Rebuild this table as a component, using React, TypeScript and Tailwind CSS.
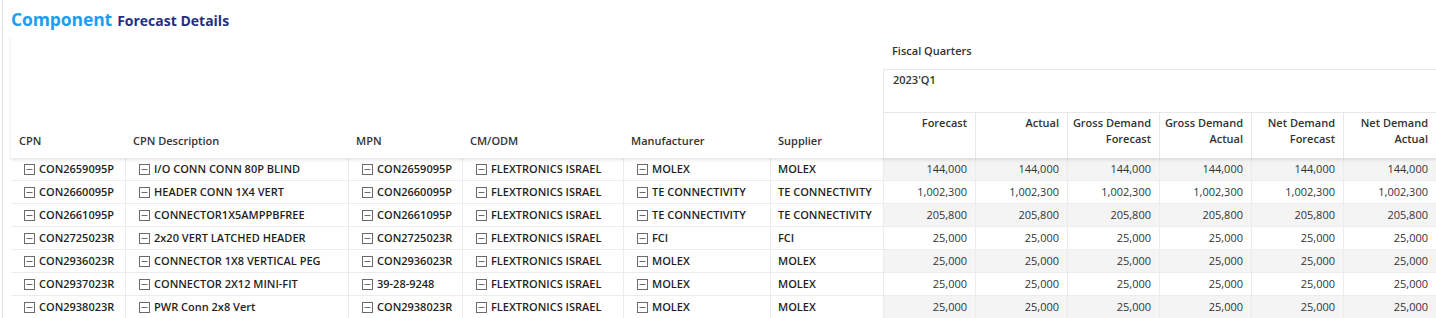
import React from "react";

const rows = [
  ["CON2659095P", "I/O CONN CONN 80P BLIND", "CON2659095P", "FLEXTRONICS ISRAEL", "MOLEX", "MOLEX", "144,000"],
  ["CON2660095P", "HEADER CONN 1X4 VERT", "CON2660095P", "FLEXTRONICS ISRAEL", "TE CONNECTIVITY", "TE CONNECTIVITY", "1,002,300"],
  ["CON2661095P", "CONNECTOR1X5AMPPBFREE", "CON2661095P", "FLEXTRONICS ISRAEL", "TE CONNECTIVITY", "TE CONNECTIVITY", "205,800"],
  ["CON2725023R", "2x20 VERT LATCHED HEADER", "CON2725023R", "FLEXTRONICS ISRAEL", "FCI", "FCI", "25,000"],
  ["CON2936023R", "CONNECTOR 1X8 VERTICAL PEG", "CON2936023R", "FLEXTRONICS ISRAEL", "MOLEX", "MOLEX", "25,000"],
  ["CON2937023R", "CONNECTOR 2X12 MINI-FIT", "39-28-9248", "FLEXTRONICS ISRAEL", "MOLEX", "MOLEX", "25,000"],
  ["CON2938023R", "PWR Conn 2x8 Vert", "CON2938023R", "FLEXTRONICS ISRAEL", "MOLEX", "MOLEX", "25,000"],
];

const cols = "grid-cols-[114px_223px_114px_161px_147px_113px_92px_92px_92px_92px_92px_93px]";

function Collapse() {
  return (
    <svg width="11" height="11" viewBox="0 0 11 11" className="shrink-0">
      <rect x="0.5" y="0.5" width="10" height="10" fill="none" stroke="#6b6b6b" strokeWidth="1" />
      <line x1="2.5" y1="5.5" x2="8.5" y2="5.5" stroke="#6b6b6b" strokeWidth="1" />
    </svg>
  );
}

const numHeaders: [string, string | null][] = [
  ["Forecast", null],
  ["Actual", null],
  ["Gross Demand", "Forecast"],
  ["Gross Demand", "Actual"],
  ["Net Demand", "Forecast"],
  ["Net Demand", "Actual"],
];

export default function App() {
  return (
    <div
      className="w-[1436px] h-[318px] overflow-hidden bg-white text-[#222]"
      style={{ fontFamily: '"Open Sans", "Noto Sans", sans-serif' }}
    >
      <div className="ml-[2px] h-full border-l border-[#e3e3e3] pl-[8px]">
        <div className="h-[35px] flex items-center gap-[5px] pt-[4px]">
          <span className="text-[17.5px] font-bold text-[#1b9ef2] tracking-[-0.1px]">Component</span>
          <span className="text-[14px] font-bold text-[#25307f] mt-[1px]">Forecast Details</span>
        </div>

        {/* Header */}
        <div className={`relative z-10 grid ${cols} grid-rows-[34px_43px_46px] shadow-[0_2px_3px_rgba(0,0,0,0.10)] text-[11px] font-semibold text-[#333]`}>
          {["CPN", "CPN Description", "MPN", "CM/ODM", "Manufacturer", "Supplier"].map((h) => (
            <div key={h} className="row-span-3 flex items-end pl-[8px] pb-[9px]">
              {h}
            </div>
          ))}
          <div className="col-span-6 pl-[9px] pt-[8px]">Fiscal Quarters</div>
          <div className="col-span-6 border-t border-l border-[#e8e8e8] pl-[9px] pt-[2px]">2023'Q1</div>
          {numHeaders.map(([a, b], i) => (
            <div
              key={i}
              className="border-t border-l border-[#e8e8e8] pr-[8px] pt-[2px] text-right leading-[16px]"
            >
              <div>{a}</div>
              {b && <div>{b}</div>}
            </div>
          ))}
        </div>

        {/* Body */}
        <div className={`grid ${cols} auto-rows-[23px] text-[11px]`}>
          {rows.map((r, ri) => {
            const stripe = ri % 2 === 0 ? "bg-[#f4f4f4]" : "bg-white";
            return (
              <React.Fragment key={ri}>
                {r.slice(0, 5).map((c, ci) => (
                  <div
                    key={ci}
                    className={`flex items-center gap-[4px] pl-[13px] border-b border-[#ececec] font-semibold text-[#1f1f1f] whitespace-nowrap ${ci > 0 ? "border-l" : ""}`}
                  >
                    <Collapse />
                    <span>{c}</span>
                  </div>
                ))}
                <div className="flex items-center pl-[7px] border-b border-l border-[#ececec] font-semibold text-[#1f1f1f] whitespace-nowrap">
                  {r[5]}
                </div>
                {[0, 1, 2, 3, 4, 5].map((k) => (
                  <div
                    key={k}
                    className={`flex items-center justify-end pr-[8px] border-b border-l border-[#ececec] text-[#333] ${stripe}`}
                  >
                    {r[6]}
                  </div>
                ))}
              </React.Fragment>
            );
          })}
        </div>
      </div>
    </div>
  );
}
